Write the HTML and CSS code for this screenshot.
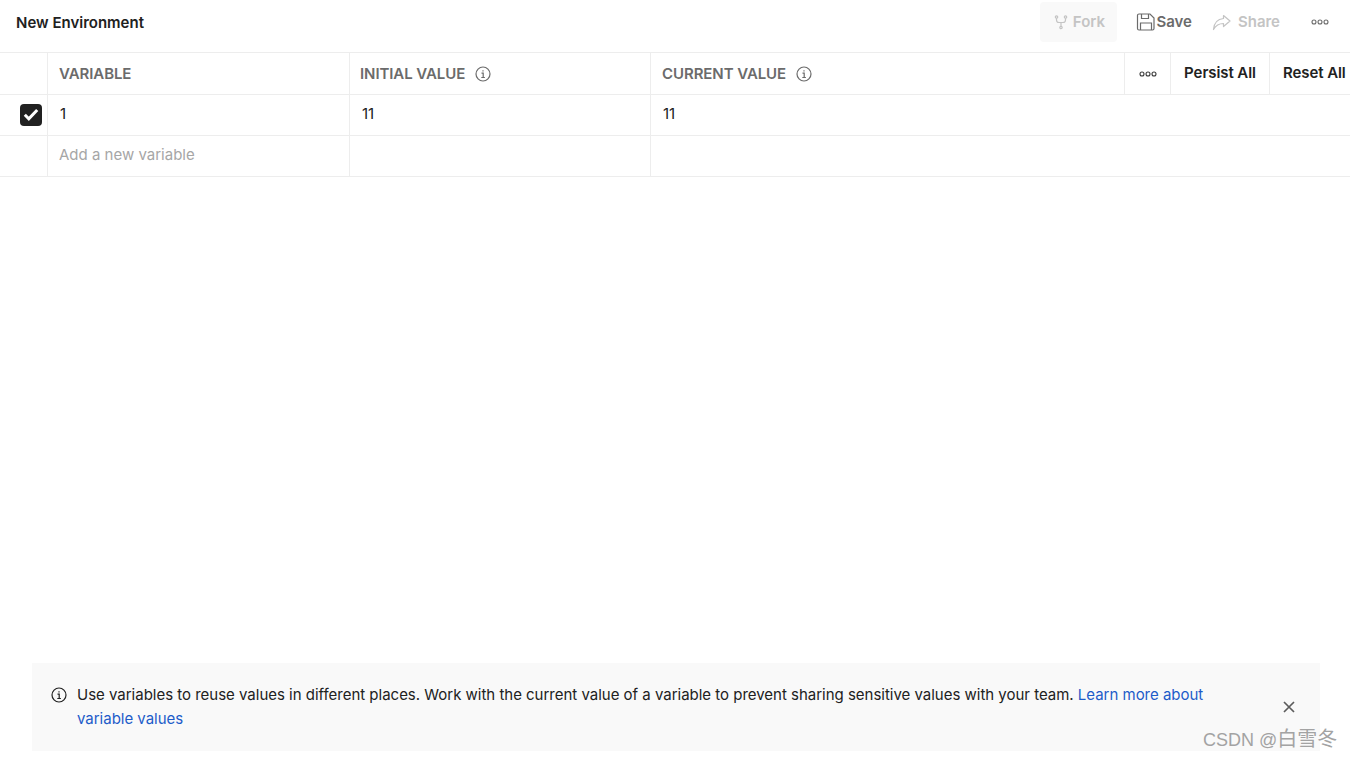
FILE: index.html
```html
<!DOCTYPE html>
<html lang="en">
<head>
<meta charset="utf-8">
<title>New Environment</title>
<link rel="stylesheet" href="styles.css">
</head>
<body>
<div class="page">
  <header class="topbar">
    <div class="title">New Environment</div>
    <div class="top-actions">
      <div class="fork">
        <svg class="ic" width="16" height="16" viewBox="0 0 16 16" fill="none" stroke="#c4c4c4" stroke-width="1.2"><circle cx="3.5" cy="3" r="1.2"/><circle cx="12.5" cy="3" r="1.2"/><circle cx="8" cy="13.5" r="1.2"/><path d="M3.5 4.2V6a2.5 2.5 0 0 0 2.5 2.5h4A2.5 2.5 0 0 0 12.500 6V4.200M8 8.500v3.800"/></svg>
        <span>Fork</span>
      </div>
      <div class="save">
        <svg width="20" height="20" viewBox="0 0 20 20" fill="none" stroke="#6b6b6b" stroke-width="1.200"><path d="M1.500 3.500a1.500 1.500 0 0 1 1.500-1.500h11l4 4v10.500a1.500 1.500 0 0 1-1.500 1.500H3a1.500 1.500 0 0 1-1.500-1.500z"/><path d="M5.500 2v4.500h7V2M4.500 18v-7h11v7"/></svg>
        <span>Save</span>
      </div>
      <div class="share">
        <svg width="20" height="18" viewBox="0 0 20 18" fill="none" stroke="#c4c4c4" stroke-width="1.200" stroke-linejoin="round"><path d="M11.500 2.500 18 8l-6.500 5.500V10.500C7 10.500 4 12 1.500 16.500 2 10.500 5.500 6 11.500 5.500z"/></svg>
        <span>Share</span>
      </div>
      <svg class="dots top-dots" width="18" height="6" viewBox="0 0 18 6" fill="none" stroke="#6b6b6b" stroke-width="1.100"><circle cx="3" cy="3" r="2"/><circle cx="9" cy="3" r="2"/><circle cx="15" cy="3" r="2"/></svg>
    </div>
  </header>

  <main class="table">
    <div class="row head">
      <div class="cell c-check"></div>
      <div class="cell c-var">VARIABLE</div>
      <div class="cell c-init">INITIAL VALUE
        <svg class="info" width="16" height="16" viewBox="0 0 16 16" fill="none" stroke="#6b6b6b" stroke-width="1.200"><circle cx="8" cy="8" r="7"/><path d="M6.500 7.200H8.200V11.500M6.300 11.500h3.600M8 4.200v1.300"/></svg>
      </div>
      <div class="cell c-cur">CURRENT VALUE
        <svg class="info" width="16" height="16" viewBox="0 0 16 16" fill="none" stroke="#6b6b6b" stroke-width="1.200"><circle cx="8" cy="8" r="7"/><path d="M6.500 7.200H8.200V11.500M6.300 11.500h3.600M8 4.200v1.300"/></svg>
      </div>
      <div class="cell c-more">
        <svg class="dots" width="18" height="6" viewBox="0 0 18 6" fill="none" stroke="#3a3a3a" stroke-width="1.100"><circle cx="3" cy="3" r="2"/><circle cx="9" cy="3" r="2"/><circle cx="15" cy="3" r="2"/></svg>
      </div>
      <div class="cell c-persist"><span class="lift">Persist All</span></div>
      <div class="cell c-reset"><span class="lift">Reset All</span></div>
    </div>
    <div class="row">
      <div class="cell c-check">
        <span class="checkbox">
          <svg width="16" height="13" viewBox="0 0 16 13" fill="none" stroke="#fff" stroke-width="3"><path d="M1.800 6.800 5.800 10.800 14.200 2"/></svg>
        </span>
      </div>
      <div class="cell c-var val">1</div>
      <div class="cell c-init val">11</div>
      <div class="cell c-rest val">11</div>
    </div>
    <div class="row">
      <div class="cell c-check"></div>
      <div class="cell c-var val placeholder">Add a new variable</div>
      <div class="cell c-init"></div>
      <div class="cell c-rest"></div>
    </div>
  </main>

  <aside class="notice">
    <svg class="notice-icon" width="16" height="16" viewBox="0 0 16 16" fill="none" stroke="#212121" stroke-width="1.200"><circle cx="8" cy="8" r="7"/><path d="M6.500 7.200H8.200V11.500M6.300 11.500h3.600M8 4.200v1.300"/></svg>
    <p class="notice-text">Use variables to reuse values in different places. Work with the current value of a variable to prevent sharing sensitive values with your team. <a class="link">Learn more about variable values</a></p>
    <svg class="close" width="12" height="12" viewBox="0 0 12 12" fill="none" stroke="#5c5c5c" stroke-width="1.700"><path d="M1 1l10 10M11 1 1 11"/></svg>
  </aside>
  <div class="watermark">CSDN @<span class="watermark-cjk">白雪冬</span></div>
</div>
</body>
</html>
```

FILE: styles.css
```css
* { box-sizing: border-box; }
html, body { margin: 0; padding: 0; background: #fff; }
body { font-family: Inter, "Liberation Sans", sans-serif; font-size: 15px; color: #212121; overflow: hidden; }
.page { position: relative; width: 1350px; height: 757px; display: flex; flex-direction: column; }

.topbar { height: 53px; flex: none; display: flex; justify-content: space-between; align-items: flex-start; border-bottom: 1px solid #ededed; padding-left: 16px; }
.title { font-weight: 600; line-height: 18px; margin-top: 14px; }
.top-actions { display: flex; align-items: center; height: 40px; margin-top: 2px; font-weight: 600; }
.fork { width: 77px; height: 40px; margin-right: -1px; background: #f9f9f9; border-radius: 4px; display: flex; align-items: center; justify-content: center; gap: 4px; color: #c4c4c4; }
.fork span, .save span, .share span { margin-bottom: 1px; }
.save { display: flex; align-items: center; margin-left: 20px; color: #6b6b6b; }
.share { display: flex; align-items: center; gap: 6px; margin-left: 20px; color: #c4c4c4; }
.top-dots { margin: 0 21px 0 31px; }

.table { flex: 1; }
.row { display: flex; height: 41px; border-bottom: 1px solid #ededed; }
.row.head { height: 42px; font-weight: 600; color: #6b6b6b; letter-spacing: -0.08px; }
.cell { display: flex; align-items: center; border-right: 1px solid #ededed; flex: none; height: 100%; }
.c-check { width: 48px; padding-left: 20px; }
.c-var { width: 302px; padding-left: 11px; }
.c-init { width: 301px; padding-left: 10px; }
.c-cur { width: 474px; padding-left: 11px; }
.c-rest { flex: 1; border-right: 0; padding-left: 12px; }
.c-init.val { padding-left: 12px; }
.c-var.val { padding-left: 12px; }
.c-var.placeholder { padding-left: 11px; }
.val { padding-bottom: 4px; }
.c-more { width: 46px; justify-content: center; }
.c-persist { width: 99px; justify-content: center; color: #212121; }
.c-reset { flex: 1; border-right: 0; color: #212121; padding-left: 13px; white-space: nowrap; }
.lift { margin-bottom: 2px; }
.info { margin-left: 10px; }
.placeholder { color: #a6a6a6; }
.checkbox { width: 22px; height: 22px; margin-bottom: 1px; background: #212121; border-radius: 4px; display: flex; align-items: center; justify-content: center; }

.notice { flex: none; position: relative; height: 88px; margin: 0 30px 6px 32px; background: #f9f9f9; padding: 20px 100px 0 45px; }
.notice-icon { position: absolute; left: 19px; top: 24px; }
.notice-text { margin: 0; line-height: 24px; color: #212121; letter-spacing: -0.014px; }
.link { color: #1d5cc9; }
.close { position: absolute; left: 1251px; top: 38px; }
.watermark { position: absolute; left: 1203px; top: 727px; font-family: "Liberation Sans", "Noto Sans CJK SC", sans-serif; font-size: 18px; line-height: 24px; color: #a3a3a3; white-space: nowrap; }
.watermark-cjk { font-size: 20px; }
```
